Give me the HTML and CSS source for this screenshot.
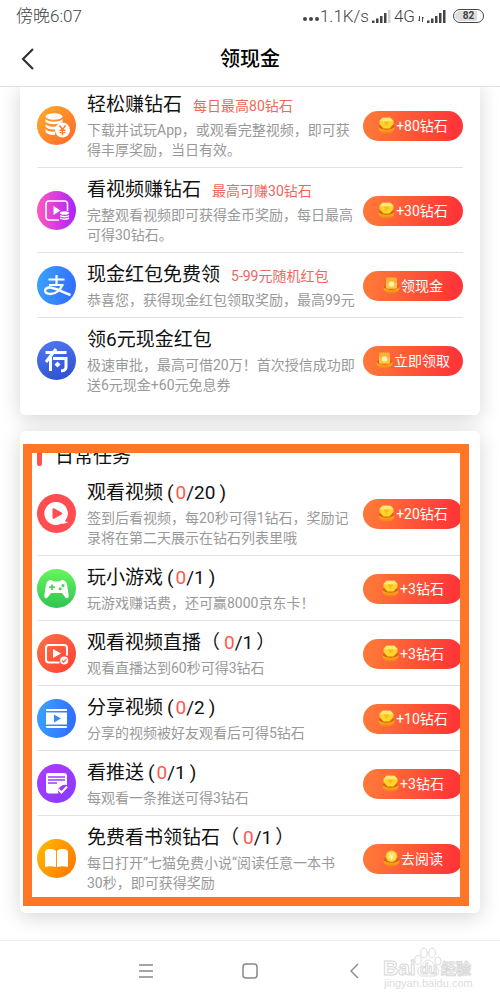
FILE: index.html
```html
<!DOCTYPE html>
<html lang="zh-CN">
<head>
<meta charset="utf-8">
<meta name="viewport" content="width=device-width, initial-scale=1">
<title>领现金</title>
<link rel="stylesheet" href="styles.css">
</head>
<body>
<svg class="defs" aria-hidden="true">
  <defs>
    <linearGradient id="gold" x1="0" y1="0" x2="0" y2="1"><stop offset="0" stop-color="#ffb52b"/><stop offset="1" stop-color="#f08410"/></linearGradient>
    <symbol id="bowl" viewBox="0 0 17 17">
      <ellipse cx="8.500" cy="10" rx="7.800" ry="3" fill="#d9650c"/>
      <path d="M.5 10c1.500 2 4 2.700 8 2.700s6.500-.7 8-2.700c0 4-2.500 6.500-8 6.500S.5 14 .5 10z" fill="url(#gold)"/>
    </symbol>
    <symbol id="gem" viewBox="0 0 17 17">
      <use href="#bowl"/>
      <path d="M1.500 4 4.500.8h8l3 3.200v3L11.500 11.500h-6L1.500 7z" fill="#ffd52d"/>
      <path d="M1.500 4 4.500.8h8l3 3.200-3.500.5h-7z" fill="#ffe873"/>
      <path d="M5.500 4.500h6L8.500 9z" fill="#ffb91c"/>
    </symbol>
    <symbol id="packet" viewBox="0 0 17 17">
      <use href="#bowl"/>
      <rect x="3" y=".7" width="11" height="11" rx="1.500" fill="#ffc44a"/>
      <path d="M3 2.200C3 1 3.500.7 4.500.7h8c1 0 1.500.4 1.500 1.500v3c-3 2-8 2-11 0z" fill="#ffb137"/>
      <circle cx="8.500" cy="7" r="2.700" fill="#fff3a8"/>
    </symbol>
    <symbol id="coin" viewBox="0 0 17 17">
      <use href="#bowl"/>
      <circle cx="8.500" cy="6.300" r="5.700" fill="#ffd22e"/>
      <circle cx="8.500" cy="6.300" r="4.300" fill="#ffe158"/>
      <path d="m6.500 3.500 2 2.500 2-2.500M8.500 6v4M6.500 7h4" fill="none" stroke="#fff8cf"/>
    </symbol>
  </defs>
</svg>

<div class="screen">
  <div class="status">
    <span>傍晚6:07</span>
    <div class="status-right">
      <svg width="16" height="6" viewBox="0 0 16 6" fill="#444"><circle cx="2" cy="3" r="2"/><circle cx="8" cy="3" r="2"/><circle cx="14" cy="3" r="2"/></svg>
      <span class="speed">1.1K/s</span>
      <svg class="signal" width="19" height="14" viewBox="0 0 19 14" fill="#444"><path d="M0 11.500h2.500V14H0zM4 9.500h2.500V14H4zM8 7h2.500v7H8zM12 4h2.500v10H12z"/><path d="M16 1h2.500v13H16z" fill="#d2d2d2"/></svg>
      <span>4G</span>
      <svg width="6" height="6" viewBox="0 0 6 6" fill="none" stroke="#444"><path d="M1.500 0v5L0 3.500M4.500 6V1L6 2.500"/></svg>
      <svg class="signal" width="19" height="14" viewBox="0 0 19 14" fill="#444"><path d="M0 11.500h2.500V14H0zM4 9.500h2.500V14H4zM8 7h2.500v7H8zM12 4h2.500v10H12zM16 1h2.500v13H16z"/></svg>
      <span class="battery"><b>82</b></span>
    </div>
  </div>

  <header class="header">
    <button class="back" type="button" aria-label="返回"><svg width="14" height="22" viewBox="0 0 14 22" fill="none" stroke="#333" stroke-width="2.200"><path d="M12 1 2 11l10 10"/></svg></button>
    <h1>领现金</h1>
  </header>

  <main class="content">
    <section class="card card-first">
      <article class="row">
        <span class="icon orange"><svg viewBox="0 0 39 39">
          <g fill="#fff"><ellipse cx="17" cy="10.500" rx="8.500" ry="3.200"/><path d="M8.500 13c2 3.500 15 3.500 17 0v2.500c-2.500 3.500-14.500 3.500-17 0zM8.500 18c2 3.300 12 3.500 15 1l-4 4.200c-5 .8-9.500-.4-11-2.700zM8.500 23c2 2.500 6 3 9.500 2.600v3.400c-4 .3-8-.8-9.500-3z"/><circle cx="25.500" cy="24" r="7.500"/></g>
          <path d="m22.500 19.500 3 4 3-4M25.500 23.500v5.500M22.500 24.300h6M22.500 26.600h6" fill="none" stroke="#ff7a2a" stroke-width="1.400"/></svg></span>
        <div class="text"><h2>轻松赚钻石<small>每日最高80钻石</small></h2><p>下载并试玩App，或观看完整视频，即可获<br>得丰厚奖励，当日有效。</p></div>
        <button class="claim" type="button"><svg><use href="#gem"/></svg>+80钻石</button>
      </article>
      <article class="row">
        <span class="icon magenta"><svg viewBox="0 0 39 39">
          <path d="M22 29H12a3 3 0 0 1-3-3V13a3 3 0 0 1 3-3h15.500a3 3 0 0 1 3 3v7" fill="none" stroke="#fff" stroke-width="1.600"/>
          <path d="m16.500 15 7 4.500-7 4.500z" fill="#fff"/>
          <g fill="#fff"><ellipse cx="27.500" cy="22" rx="4.500" ry="1.800"/><path d="M23 23.700c1.500 1.600 7.500 1.600 9 0v1.500c-1.500 1.600-7.500 1.600-9 0zM23 26.200c1.500 1.600 7.500 1.600 9 0v1.500c-1.500 1.600-7.500 1.600-9 0z"/></g></svg></span>
        <div class="text"><h2>看视频赚钻石<small>最高可赚30钻石</small></h2><p>完整观看视频即可获得金币奖励，每日最高<br>可得30钻石。</p></div>
        <button class="claim" type="button"><svg><use href="#gem"/></svg>+30钻石</button>
      </article>
      <article class="row">
        <span class="icon blue"><svg viewBox="0 0 39 39" fill="none" stroke="#fff">
          <path d="M11.500 13.500h16M19.500 9v10M12 19h14.500" stroke-width="2.200"/>
          <path d="M25.500 18.500c-2 5-6.500 9.500-12 9.500-7 0-7-6.500-1-6.500 6 0 12 4.500 21 7.500" stroke-width="2.400"/></svg></span>
        <div class="text"><h2>现金红包免费领<small>5-99元随机红包</small></h2><p>恭喜您，获得现金红包领取奖励，最高99元</p></div>
        <button class="claim" type="button"><svg><use href="#packet"/></svg>领现金</button>
      </article>
      <article class="row">
        <span class="icon navy"><svg viewBox="0 0 39 39" fill="none" stroke="#fff" stroke-width="3">
          <path d="M8.500 11.500h21M19 8 9 21M13.500 16v14M16 17.500h13v8.500c0 2.500-2 3.800-5 3.800"/>
          <path d="m20.500 20.500 3 3-3 3-3-3z" fill="#fff" stroke="none"/></svg></span>
        <div class="text"><h2>领6元现金红包</h2><p>极速审批，最高可借20万！首次授信成功即<br>送6元现金+60元免息券</p></div>
        <button class="claim" type="button"><svg><use href="#packet"/></svg>立即领取</button>
      </article>
    </section>

    <section class="card card-daily">
      <h2 class="section-title">日常任务</h2>
      <article class="row">
        <span class="icon red"><svg viewBox="0 0 39 39">
          <path d="M19 8a11.500 11.500 0 1 0 5.500 21.500c2 .5 4.500.2 6.500-1.500-1.500 0-2.500-.4-3-1A11.500 11.500 0 0 0 19 8z" fill="#fff"/>
          <path d="M15.500 15.500q0-2 2-1l7 4q1.500 1 0 2l-7 4q-2 1-2-1z" fill="#ff4d52"/></svg></span>
        <div class="text"><h2>观看视频<i class="open">(</i><em>0</em>/20<i class="close">)</i></h2><p>签到后看视频，每20秒可得1钻石，奖励记<br>录将在第二天展示在钻石列表里哦</p></div>
        <button class="claim" type="button"><svg><use href="#gem"/></svg>+20钻石</button>
      </article>
      <article class="row">
        <span class="icon green"><svg viewBox="0 0 39 39">
          <path d="M12 11.500c2-1 3.500 0 4.500 1h6c1-1 2.500-2 4.500-1 2.500 1 3 3.500 3.500 7l1.200 8c.3 3-2.200 3.500-3.700 1.500L25 24H14l-3 4c-1.500 2-4 1.500-3.700-1.500l1.200-8c.5-3.500 1-6 3.500-7z" fill="#fff"/>
          <path d="M15 15.500v5.500M12.200 18.200h5.600" stroke="#47d353" stroke-width="1.700"/><circle cx="26" cy="16.500" r="1.500" fill="#47d353"/><circle cx="23.200" cy="19.700" r="1.500" fill="#47d353"/></svg></span>
        <div class="text"><h2>玩小游戏<i class="open">(</i><em>0</em>/1<i class="close">)</i></h2><p>玩游戏赚话费，还可赢8000京东卡！</p></div>
        <button class="claim" type="button"><svg><use href="#gem"/></svg>+3钻石</button>
      </article>
      <article class="row">
        <span class="icon coral"><svg viewBox="0 0 39 39">
          <path d="M22.500 28.500H12a3 3 0 0 1-3-3V14a3 3 0 0 1 3-3h15a3 3 0 0 1 3 3v7.500" fill="none" stroke="#fff" stroke-width="2"/>
          <path d="m16 15 8 4.500-8 4.500z" fill="#fff"/><circle cx="27.200" cy="26.500" r="4" fill="#fff"/><path d="m25.200 26.500 1.500 1.600 2.700-3" fill="none" stroke="#ff5137" stroke-width="1.200"/></svg></span>
        <div class="text"><h2>观看视频直播<i class="wide">（</i><em>0</em>/1<i class="wide">）</i></h2><p>观看直播达到60秒可得3钻石</p></div>
        <button class="claim" type="button"><svg><use href="#gem"/></svg>+3钻石</button>
      </article>
      <article class="row">
        <span class="icon blue"><svg viewBox="0 0 39 39">
          <path d="M9 12v-1q0-1 1-1h19q1 0 1 1v1zM9 13.500h21v12H9zM9 27h21v1q0 1-1 1H10q-1 0-1-1z" fill="#fff"/><path d="m17 15.500 7 4-7 4z" fill="#348bff"/></svg></span>
        <div class="text"><h2>分享视频<i class="open">(</i><em>0</em>/2<i class="close">)</i></h2><p>分享的视频被好友观看后可得5钻石</p></div>
        <button class="claim" type="button"><svg><use href="#gem"/></svg>+10钻石</button>
      </article>
      <article class="row">
        <span class="icon purple"><svg viewBox="0 0 39 39">
          <path d="M11 9h16q3 0 3 3v9q-4-1-7 2-3 2-1.500 6.500H12q-3 0-3-3V11q0-2 2-2z" fill="#fff"/>
          <path d="M11 13h17M11 16h17M11 19h9" stroke="#9b3cff" stroke-width="1.400"/><path d="m21.500 25.500 3 3 5.500-6" fill="none" stroke="#fff" stroke-width="2"/></svg></span>
        <div class="text"><h2>看推送<i class="open">(</i><em>0</em>/1<i class="close">)</i></h2><p>每观看一条推送可得3钻石</p></div>
        <button class="claim" type="button"><svg><use href="#gem"/></svg>+3钻石</button>
      </article>
      <article class="row">
        <span class="icon amber"><svg viewBox="0 0 39 39">
          <path d="M19 12c-2-2-6.500-2.500-9-1.500q-2 .5-2 2.500v15q4.500-1.500 11 0zM20 12c2-2 6.500-2.500 9-1.500q2 .5 2 2.500v15q-4.500-1.500-11 0z" fill="#fff"/></svg></span>
        <div class="text"><h2>免费看书领钻石<i class="wide">（</i><em>0</em>/1<i class="wide">）</i></h2><p>每日打开”七猫免费小说“阅读任意一本书<br>30秒，即可获得奖励</p></div>
        <button class="claim" type="button"><svg><use href="#coin"/></svg>去阅读</button>
      </article>
      <div class="frame"></div>
    </section>
  </main>

  <nav class="nav">
    <button type="button" aria-label="菜单"><svg width="16" height="16" viewBox="0 0 16 16" fill="none" stroke="#888" stroke-width="1.300"><path d="M1 2h14M1 8h14M1 14h14"/></svg></button>
    <button type="button" aria-label="主页"><svg width="16" height="16" viewBox="0 0 16 16" fill="none" stroke="#888" stroke-width="1.500"><rect x="1" y="1" width="14" height="14" rx="3"/></svg></button>
    <button type="button" aria-label="返回"><svg width="16" height="16" viewBox="0 0 16 16" fill="none" stroke="#888" stroke-width="1.400"><path d="M12 1 5 8l7 7"/></svg></button>
    <div class="watermark">
      <svg width="92" height="46" viewBox="0 0 92 46">
        <g fill="#fff" stroke="#dcdcdc"><ellipse cx="35" cy="14" rx="3.200" ry="4.500"/><ellipse cx="41" cy="7" rx="3.300" ry="5"/><ellipse cx="49" cy="7" rx="3.300" ry="5"/><ellipse cx="55" cy="15" rx="3.200" ry="4"/><path d="M45 14c-3.500 0-5 4-8.500 7-3 3-2.500 9 3 9h11c6 0 6.500-6 3-9-4-3.500-4.500-7-8.500-7z"/></g>
        <g class="wm-big"><text x="0" y="29">Bai</text><text class="wm-du" x="37" y="28">du</text><text class="wm-cn" x="58" y="28">经验</text></g>
        <text class="wm-url" x="1" y="41">jingyan.baidu.com</text>
      </svg>
    </div>
  </nav>
</div>
</body>
</html>
```
FILE: styles.css
```css
* { box-sizing: border-box; }

body {
  margin: 0;
  background: #fff;
  color: #111;
  font-family: Roboto, "Noto Sans CJK SC", sans-serif;
}

button {
  border: 0;
  padding: 0;
  background: none;
  font: inherit;
}

svg { display: block; }
h1, h2, p { margin: 0; }

.defs { position: absolute; width: 0; height: 0; }

.screen {
  display: flex;
  flex-direction: column;
  min-height: 100vh;
}

.status {
  display: flex;
  justify-content: space-between;
  align-items: center;
  height: 32px;
  padding: 0 16px;
  color: #444;
  font-size: 17px;
  font-weight: 300;
  line-height: 32px;
}

.status-right { display: flex; align-items: center; gap: 3px; }
.status-right svg { margin-top: 6px; }
.status-right .signal { margin-top: 0; }
.speed { margin-left: -2px; }

.battery {
  display: flex;
  width: 31px;
  height: 14px;
  margin-left: 4px;
  padding: 1px;
  border: 1px solid #444;
  border-radius: 7px;
}

.battery b {
  flex: 1;
  border-radius: 5px;
  background: linear-gradient(90deg, #ddd 82%, #fff 82%);
  font-size: 10px;
  font-weight: 700;
  line-height: 10px;
  text-align: center;
}

.header {
  display: grid;
  grid-template-columns: 40px 1fr 40px;
  align-items: center;
  height: 55px;
  border-bottom: 1px solid #e2e2e2;
}

.header h1 {
  color: #000;
  font-size: 20px;
  font-weight: 500;
  line-height: 28px;
  text-align: center;
}

.back { padding-left: 21px; }

.content {
  flex: 1;
  display: flex;
  flex-direction: column;
  gap: 16px;
  padding: 0 20px 27px;
  overflow: hidden;
  isolation: isolate;
}

.card {
  position: relative;
  padding: 0 17px 12px;
  border-radius: 6px;
  background: #fff;
}

/* Shadows sit on a lower layer so that neither card darkens the other. */
.card::before {
  content: "";
  position: absolute;
  z-index: -1;
  inset: 0;
  border-radius: 6px;
  box-shadow: 0 4px 20px rgba(0, 0, 0, 0.17);
}

.card-first { margin-top: -4px; }

.section-title {
  height: 40px;
  padding: 12px 0 4px;
  font-size: 19px;
  font-weight: 400;
  line-height: 28px;
}

.section-title::before {
  content: "";
  display: inline-block;
  width: 5px;
  height: 18px;
  margin-right: 13px;
  border-radius: 2px;
  background: #ff5350;
  vertical-align: -3px;
}

.row {
  display: flex;
  align-items: center;
  padding: 8px 0 7px;
  border-bottom: 1px solid #e2e2e2;
}

.row:nth-last-child(1 of .row) { border-bottom-color: transparent; }

.icon {
  flex: none;
  width: 39px;
  height: 39px;
  margin-right: 11px;
  border-radius: 50%;
}

.orange { background: linear-gradient(135deg, #ffae29, #ff652d); }
.magenta { background: linear-gradient(90deg, #ff58be, #ac22ff); }
.blue { background: linear-gradient(100deg, #3aa5ff, #3168ff); }
.navy { background: linear-gradient(160deg, #527af5, #2a4dcc); }
.red { background: #ff4d52; }
.green { background: linear-gradient(#67f65d, #30c452); }
.coral { background: linear-gradient(135deg, #ff7047, #ff3e31); }
.purple { background: linear-gradient(135deg, #ac3cff, #8839ff); }
.amber { background: linear-gradient(120deg, #ffbe00, #ff7100); }

.text { flex: 1; min-width: 0; white-space: nowrap; }

.text h2 {
  margin-bottom: 2px;
  font-size: 19px;
  font-weight: 400;
  line-height: 27px;
}

.text small {
  margin-left: 11px;
  color: #ee675c;
  font-size: 14px;
  line-height: 14px;
}

.text em { color: #ff584e; font-style: normal; }
.text i { font-style: normal; }
.open { margin: 0 2px 0 4px; }
.close { margin-left: 4px; }
.wide + em { margin-left: 4px; }
em ~ .wide { margin-left: 3px; }

.text p {
  color: #999;
  font-size: 14px;
  line-height: 20px;
}

.claim {
  flex: none;
  display: flex;
  justify-content: center;
  align-items: center;
  gap: 1px;
  width: 100px;
  height: 30px;
  border-radius: 15px;
  background: linear-gradient(100deg, #ff7638 10%, #ff3637 90%);
  color: #fff;
  font-size: 14px;
  line-height: 20px;
}

.claim svg { width: 17px; height: 17px; }

.frame {
  position: absolute;
  top: 13px;
  right: 11px;
  bottom: 7px;
  left: 3px;
  border: 9px solid #ff7626;
  pointer-events: none;
}

.nav {
  position: relative;
  display: flex;
  justify-content: center;
  gap: 88px;
  height: 60px;
  border-top: 1px solid #eee;
}

.nav button { display: grid; place-items: center; width: 16px; }

.watermark { position: absolute; right: 25px; top: 5px; }

.wm-big {
  fill: #fff;
  stroke: #d8d8d8;
  stroke-width: 1px;
  font-family: "Liberation Sans", "Noto Sans CJK SC", sans-serif;
  font-size: 21px;
  font-weight: 700;
}

.wm-du { font-size: 14px; }
.wm-cn { font-size: 15px; }

.wm-url {
  fill: #dcdcdc;
  font-family: "Liberation Sans", sans-serif;
  font-size: 11px;
}
```
